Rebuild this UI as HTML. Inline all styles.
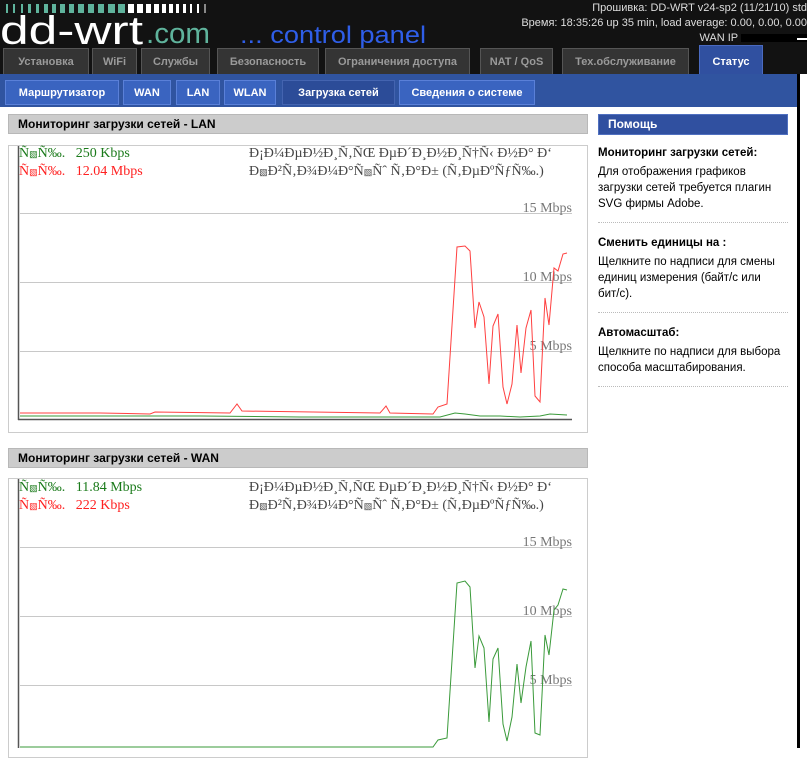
<!DOCTYPE html>
<html><head><meta charset="utf-8">
<style>
*{margin:0;padding:0;box-sizing:border-box}
body{width:807px;height:748px;overflow:hidden;background:#fff;font-family:"Liberation Sans","DejaVu Sans",sans-serif;position:relative}
.abs{position:absolute}
#hdr{left:0;top:0;width:807px;height:74px;background:#121212}
.tab{position:absolute;top:48px;height:26px;background:#343434;border:1px solid #555;border-bottom:none;color:#9a9a9a;font-weight:bold;font-size:11px;text-align:center;line-height:26px}
.tab.on{background:#3050a0;border-color:#4a6ac0;color:#fff;top:45px;height:29px;line-height:32px}
#bar{left:0;top:74px;width:797px;height:33px;background:#3054a0}
.st{position:absolute;top:80px;height:25px;background:#3a64c0;border:1px solid #5a80d8;color:#fff;font-weight:bold;font-size:11px;text-align:center;line-height:24px}
.st.on{background:#2c4c98;border-color:#4464b0}
.ph{position:absolute;left:8px;width:580px;height:20px;background:#cccccc;border:1px solid #b8b8b8;font-weight:bold;font-size:12px;line-height:18px;padding-left:9px;color:#000}
.box{position:absolute;left:8px;width:580px;border:1px solid #ccc}
.s{font-family:"Liberation Serif",serif;font-size:14px;position:absolute;white-space:nowrap}
.help{font-size:11.5px;color:#000;line-height:16px}
</style></head><body>
<div id="hdr" class="abs"></div>
<svg class="abs" style="left:0;top:0" width="460" height="48">
<g fill="#5fb39c">
<rect x="6" y="4" width="2" height="9"/><rect x="13" y="4" width="2" height="9"/><rect x="21" y="4" width="2" height="9"/><rect x="28" y="4" width="3" height="9"/><rect x="36" y="4" width="3" height="9"/><rect x="44" y="4" width="4" height="9"/><rect x="52" y="4" width="4" height="9"/><rect x="60" y="4" width="5" height="9"/><rect x="69" y="4" width="5" height="9"/><rect x="78" y="4" width="6" height="9"/><rect x="88" y="4" width="6" height="9"/><rect x="98" y="4" width="6" height="9"/><rect x="108" y="4" width="7" height="9"/><rect x="118" y="4" width="7" height="9"/></g>
<g fill="#fff"><rect x="128" y="4" width="6" height="9"/><rect x="137" y="4" width="6" height="9"/><rect x="146" y="4" width="5" height="9"/><rect x="154" y="4" width="5" height="9"/><rect x="162" y="4" width="4" height="9"/><rect x="169" y="4" width="4" height="9"/><rect x="176" y="4" width="3" height="9"/><rect x="183" y="4" width="3" height="9"/><rect x="190" y="4" width="2" height="9"/><rect x="197" y="4" width="2" height="9"/><rect x="204" y="4" width="2" height="9" fill="#888"/></g>
<text x="0" y="44" font-family="Liberation Sans,sans-serif" font-size="40" fill="#fff" textLength="143" lengthAdjust="spacingAndGlyphs">dd-wrt</text>
<text x="146" y="43" font-family="Liberation Sans,sans-serif" font-size="29" fill="#5fb39c" textLength="64" lengthAdjust="spacingAndGlyphs">.com</text>
<text x="240" y="43" font-family="Liberation Sans,sans-serif" font-size="24" fill="#2f5ee8" textLength="186" lengthAdjust="spacingAndGlyphs">... control panel</text>
</svg>
<div class="abs" style="right:0;top:1px;color:#ddd;font-size:11px;text-align:right;line-height:15px;width:400px">Прошивка: DD-WRT v24-sp2 (11/21/10) std<br>Время: 18:35:26 up 35 min, load average: 0.00, 0.00, 0.00<br>WAN IP <span style="display:inline-block;width:66px;height:8px;background:#000;vertical-align:middle"></span></div>
<div class="abs" style="left:797px;top:38px;width:10px;height:2px;background:#fff"></div>

<div class="tab" style="left:3px;width:86px">Установка</div>
<div class="tab" style="left:92px;width:45px">WiFi</div>
<div class="tab" style="left:141px;width:69px">Службы</div>
<div class="tab" style="left:217px;width:102px">Безопасность</div>
<div class="tab" style="left:325px;width:145px">Ограничения доступа</div>
<div class="tab" style="left:480px;width:73px">NAT / QoS</div>
<div class="tab" style="left:562px;width:127px">Тех.обслуживание</div>
<div class="tab on" style="left:699px;width:64px">Статус</div>

<div id="bar" class="abs"></div>
<div class="st" style="left:5px;width:114px">Маршрутизатор</div>
<div class="st" style="left:123px;width:48px">WAN</div>
<div class="st" style="left:176px;width:44px">LAN</div>
<div class="st" style="left:224px;width:52px">WLAN</div>
<div class="st on" style="left:282px;width:113px">Загрузка сетей</div>
<div class="st" style="left:399px;width:136px">Сведения о системе</div>
<div class="abs" style="left:797px;top:74px;width:3px;height:674px;background:#000"></div>

<div class="ph" style="top:114px">Мониторинг загрузки сетей - LAN</div>
<div class="box" style="top:145px;height:288px"></div>
<div class="ph" style="top:448px">Мониторинг загрузки сетей - WAN</div>
<div class="box" style="top:478px;height:280px"></div>

<svg class="abs" style="left:0;top:0" width="590" height="748">
<g stroke="#c8c8c8" stroke-width="1">
<line x1="20" y1="213.5" x2="572" y2="213.5"/><line x1="20" y1="282.5" x2="572" y2="282.5"/><line x1="20" y1="351.5" x2="572" y2="351.5"/>
<line x1="20" y1="547.5" x2="572" y2="547.5"/><line x1="20" y1="616.5" x2="572" y2="616.5"/><line x1="20" y1="685.5" x2="572" y2="685.5"/>
</g>
<g font-family="Liberation Serif,serif" font-size="14" fill="#777" text-anchor="end">
<text x="572" y="212">15 Mbps</text><text x="572" y="281">10 Mbps</text><text x="572" y="350">5 Mbps</text>
<text x="572" y="546">15 Mbps</text><text x="572" y="615">10 Mbps</text><text x="572" y="684">5 Mbps</text>
</g>
<line x1="18.5" y1="146" x2="18.5" y2="420" stroke="#555" stroke-width="1.5"/>
<line x1="18" y1="419.5" x2="572" y2="419.5" stroke="#555" stroke-width="1.5"/>
<line x1="18.5" y1="479" x2="18.5" y2="748" stroke="#555" stroke-width="1.5"/>
<polyline fill="none" stroke="#ff4040" stroke-width="1" points="20,413 100,413 150,414 155,412 230,413 237,404 242,411 380,413 386,406 390,413 433,414 438,407 447,404 457,247 465,246 470,251 475,328 479,302 484,317 489,384 493,326 498,314 503,387 507,404 512,384 517,325 521,373 526,328 531,310 535,396 540,402 545,298 549,325 554,268 558,271 563,254 567,253"/>
<polyline fill="none" stroke="#3a9a3a" stroke-width="1" points="20,416 200,416 300,417 440,417 455,413 465,414 480,416 500,416 520,417 540,416 550,414 567,415"/>
<polyline fill="none" stroke="#3a9a3a" stroke-width="1" points="20,747 433,747 438,740 447,738 457,583 465,581 470,587 475,668 479,636 484,648 489,722 493,659 498,648 503,724 507,741 512,717 517,664 521,703 526,667 531,641 535,733 540,735 545,635 549,655 554,610 558,605 563,589 567,590"/>
</svg>
<div class="s" style="left:19px;top:146px;color:#1a7a1a">Ñ<span style="font-size:9px">&#9639;</span>Ñ‰.&nbsp;&nbsp;&nbsp;250 Kbps</div>
<div class="s" style="left:19px;top:164px;color:#ff2020">Ñ<span style="font-size:9px">&#9639;</span>Ñ‰.&nbsp;&nbsp;&nbsp;12.04 Mbps</div>
<div class="s" style="left:249px;top:146px;color:#444;width:322px;overflow:hidden">Ð¡Ð¼ÐµÐ½Ð¸Ñ‚ÑŒ ÐµÐ´Ð¸Ð½Ð¸Ñ†Ñ‹ Ð½Ð° Ð‘</div>
<div class="s" style="left:249px;top:164px;color:#444">Ð<span style="font-size:9px">&#9639;</span>Ð²Ñ‚Ð¾Ð¼Ð°Ñ<span style="font-size:9px">&#9639;</span>Ñˆ Ñ‚Ð°Ð± (Ñ‚ÐµÐºÑƒÑ‰.)</div>
<div class="s" style="left:19px;top:480px;color:#1a7a1a">Ñ<span style="font-size:9px">&#9639;</span>Ñ‰.&nbsp;&nbsp;&nbsp;11.84 Mbps</div>
<div class="s" style="left:19px;top:498px;color:#ff2020">Ñ<span style="font-size:9px">&#9639;</span>Ñ‰.&nbsp;&nbsp;&nbsp;222 Kbps</div>
<div class="s" style="left:249px;top:480px;color:#444;width:322px;overflow:hidden">Ð¡Ð¼ÐµÐ½Ð¸Ñ‚ÑŒ ÐµÐ´Ð¸Ð½Ð¸Ñ†Ñ‹ Ð½Ð° Ð‘</div>
<div class="s" style="left:249px;top:498px;color:#444">Ð<span style="font-size:9px">&#9639;</span>Ð²Ñ‚Ð¾Ð¼Ð°Ñ<span style="font-size:9px">&#9639;</span>Ñˆ Ñ‚Ð°Ð± (Ñ‚ÐµÐºÑƒÑ‰.)</div>

<div class="abs" style="left:598px;top:114px;width:190px;height:21px;background:#3050a0;border:1px solid #5070c0;color:#fff;font-weight:bold;font-size:12px;line-height:19px;padding-left:9px">Помощь</div>
<div class="abs help" style="left:598px;top:145px;width:190px">
<div style="font-weight:bold;margin-bottom:3px">Мониторинг загрузки сетей:</div>
<div style="width:178px">Для отображения графиков загрузки сетей требуется плагин SVG фирмы Adobe.</div>
<div style="border-top:1px dotted #bbb;margin:10px 0 12px"></div>
<div style="font-weight:bold;margin-bottom:3px">Сменить единицы на :</div>
<div style="width:178px">Щелкните по надписи для смены единиц измерения (байт/с или бит/с).</div>
<div style="border-top:1px dotted #bbb;margin:10px 0 12px"></div>
<div style="font-weight:bold;margin-bottom:3px">Автомасштаб:</div>
<div style="width:185px">Щелкните по надписи для выбора способа масштабирования.</div>
<div style="border-top:1px dotted #bbb;margin:10px 0 0"></div>
</div>
</body></html>
